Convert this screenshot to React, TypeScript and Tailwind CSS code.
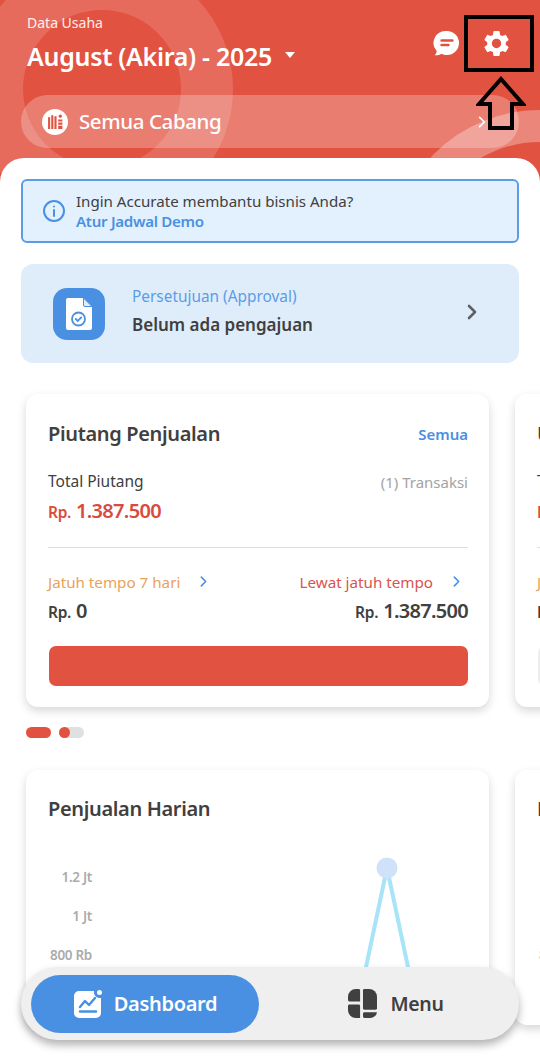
import React from "react";

const Chevron = ({ className, width = 3 }: { className: string; width?: number }) => (
  <svg viewBox="0 0 24 24" fill="none" stroke="currentColor" strokeWidth={width} strokeLinecap="round" strokeLinejoin="round" className={className}>
    <path d="M8 4l8 8-8 8" />
  </svg>
);

const Money = ({ value, tone }: { value: string; tone: string }) => (
  <div className={`flex items-baseline gap-[5px] font-semibold ${tone}`}>
    <span className="text-[15.5px] tracking-[-0.3px]">Rp.</span>
    <span className="text-[20px] tracking-[-0.7px]">{value}</span>
  </div>
);

const PiutangCard = ({ title, bar }: { title: string; bar: string }) => (
  <div className="w-[463px] h-[313px] shrink-0 rounded-[12px] bg-white pl-[22px] pr-[21px] pt-[25px] shadow-[0_4px_10px_rgba(0,0,0,0.16)]">
    <div className="flex items-center justify-between h-[30px]">
      <span className="text-[20px] font-semibold tracking-[-0.35px] text-[#404040]">{title}</span>
      <span className="text-[15px] font-semibold text-[#4a90e2]">Semua</span>
    </div>
    <div className="mt-[21px] flex items-center justify-between h-[24px] text-[15.5px]">
      <span className="text-[#404040]">Total Piutang</span>
      <span className="text-[15px] text-[#a3a3a3]">(1) Transaksi</span>
    </div>
    <div className="mt-[2px] h-[30px]">
      <Money value="1.387.500" tone="text-[#d94c3d]" />
    </div>
    <div className="mt-[21px] h-px bg-[#dddddd]" />
    <div className="mt-[22px] flex items-center justify-between h-[24px] text-[15.2px]">
      <div className="flex items-center gap-[17px] text-[#e8a25b]">
        <span>Jatuh tempo 7 hari</span>
        <Chevron className="w-[13px] h-[13px] text-[#4a90e2]" />
      </div>
      <div className="flex items-center gap-[17px] pr-[5px] text-[#d9534f]">
        <span>Lewat jatuh tempo</span>
        <Chevron className="w-[13px] h-[13px] text-[#4a90e2]" />
      </div>
    </div>
    <div className="mt-[1px] flex items-center justify-between h-[32px]">
      <Money value="0" tone="text-[#404040]" />
      <Money value="1.387.500" tone="text-[#404040]" />
    </div>
    <div className={`mt-[19px] ml-px h-[40px] rounded-[7px] ${bar}`} />
  </div>
);

const ChartCard = ({ title }: { title: string }) => (
  <div className="relative w-[463px] h-[255px] shrink-0 rounded-[12px] bg-white pl-[22px] pr-[21px] pt-[24px] shadow-[0_4px_10px_rgba(0,0,0,0.16)]">
    <div className="h-[30px] text-[20px] font-semibold tracking-[-0.35px] text-[#404040]">{title}</div>
    <div className="mt-[43px] flex flex-col items-end w-[44px] gap-[19px] text-[13.5px] leading-[20px] font-semibold tracking-[-0.3px] text-[#ababab]">
      <span>1.2 Jt</span>
      <span>1 Jt</span>
      <span className="whitespace-nowrap">800 Rb</span>
    </div>
    <svg viewBox="0 0 80 130" className="absolute left-[321px] top-[86px] w-[80px] h-[130px]">
      <path d="M15 130L40 12L65 130" fill="none" stroke="#a8e4f8" strokeWidth={4} />
      <circle cx="40" cy="12" r="10.5" fill="#cfe2fa" />
    </svg>
  </div>
);

export default function App() {
  return (
    <div className="relative w-[540px] h-[1064px] overflow-hidden bg-white font-['Noto_Sans',sans-serif]">
      <header className="relative h-[190px] overflow-hidden bg-[#e25241]">
        <div className="absolute left-[-29px] top-[-42px] w-[262px] h-[262px] rounded-full border-[52px] border-white/15" />
        <div className="absolute left-[390px] top-[110px] w-[300px] h-[300px] rounded-full border-[32px] border-white/30" />
        <div className="relative flex justify-between pl-[27px] pt-[14px]">
          <div className="text-white">
            <div className="text-[14px] leading-[18px] text-white/90">Data Usaha</div>
            <div className="mt-[4px] flex items-center gap-[13px]">
              <span className="text-[25px] leading-[40px] font-semibold tracking-[-0.3px]">August (Akira) - 2025</span>
              <span className="mt-[-3px] w-0 h-0 border-x-[5px] border-t-[6px] border-x-transparent border-t-white" />
            </div>
          </div>
          <div className="flex items-center gap-[21px] pr-[28px] pb-[4px] text-white">
            <svg viewBox="0 0 28 28" className="w-[28px] h-[28px]">
              <path d="M15 2a12 12 0 0 1 0 24c-2.300 0-4-.5-5.600-1.300C7.600 26 5 26.500 2.500 26.300c1.300-1 2.100-2.600 2.200-4.300A12 12 0 0 1 15 2z" fill="#fff" />
              <path d="M9.500 11.500h11M9.500 16h7" stroke="#e25241" strokeWidth={2.400} strokeLinecap="round" />
            </svg>
            <svg viewBox="0 0 24 24" fill="#fff" className="w-[31px] h-[31px]">
              <path d="M19.140 12.940c.04-.3.06-.61.06-.94 0-.32-.02-.64-.07-.94l2.030-1.580c.18-.14.23-.41.12-.61l-1.920-3.320c-.12-.22-.37-.29-.59-.22l-2.390.96c-.5-.38-1.030-.7-1.620-.94l-.36-2.540c-.04-.24-.24-.41-.48-.41h-3.840c-.24 0-.43.17-.47.41l-.36 2.540c-.59.24-1.130.57-1.620.94l-2.390-.96c-.22-.08-.47 0-.59.22L2.740 8.870c-.12.21-.08.47.12.61l2.030 1.580c-.05.3-.09.63-.09.94s.02.64.07.94l-2.030 1.580c-.18.14-.23.41-.12.61l1.920 3.320c.12.22.37.29.59.22l2.390-.96c.5.38 1.030.7 1.620.94l.36 2.540c.05.24.24.41.48.41h3.840c.24 0 .44-.17.47-.41l.36-2.540c.59-.24 1.130-.56 1.620-.94l2.390.96c.22.08.47 0 .59-.22l1.920-3.320c.12-.22.07-.47-.12-.61l-2.010-1.580zM12 15.600c-1.980 0-3.600-1.620-3.600-3.600s1.620-3.600 3.600-3.600 3.600 1.620 3.600 3.600-1.620 3.600-3.600 3.600z" />
            </svg>
          </div>
        </div>
        <div className="relative mx-[21px] mt-[19px] flex h-[53px] items-center rounded-full bg-white/25 pl-[21px] pr-[30px] text-white">
          <span className="flex w-[26px] h-[26px] items-center justify-center rounded-full bg-white">
            <svg viewBox="0 0 16 16" className="w-[17px] h-[17px]" fill="#e25241">
              <path d="M1 4h2v11H1zM4 2h2v13H4zM7 3h2v12H7z" />
              <circle cx="12.500" cy="3" r="1.500" />
              <path d="M10.500 6h4v2h-4zM10.500 9h4v2h-4zM10.500 12h4v3h-4z" />
            </svg>
          </span>
          <span className="ml-[11px] flex-1 text-[20.5px] font-medium tracking-[-0.4px]">Semua Cabang</span>
          <Chevron className="w-[14px] h-[14px]" />
        </div>
      </header>

      <main className="relative -mt-[32px] rounded-t-[24px] bg-white pt-[21px]">
        <section className="mx-[21px] flex h-[64px] items-center rounded-[6px] border-2 border-[#5b9ce6] bg-[#e3f0fd] pl-[19px]">
          <svg viewBox="0 0 24 24" fill="none" stroke="#4a90e2" strokeWidth={2} strokeLinecap="round" className="w-[24px] h-[24px]">
            <circle cx="12" cy="12" r="10" />
            <path d="M12 11v6M12 7.500v.01" />
          </svg>
          <div className="ml-[10px] text-[15.1px] leading-[20px]">
            <div className="text-[#404040]">Ingin Accurate membantu bisnis Anda?</div>
            <div className="font-semibold tracking-[-0.3px] text-[#4a90e2]">Atur Jadwal Demo</div>
          </div>
        </section>

        <section className="mx-[21px] mt-[21px] flex h-[99px] items-center rounded-[12px] bg-[#dfedfb] pl-[32px] pr-[38px]">
          <span className="flex w-[52px] h-[52px] items-center justify-center rounded-[14px] bg-[#4a90e2]">
            <svg viewBox="0 0 26 32" className="w-[26px] h-[32px]">
              <path d="M2 0h15l9 9v21a2 2 0 0 1-2 2H2a2 2 0 0 1-2-2V2a2 2 0 0 1 2-2z" fill="#fff" />
              <path d="M17.500 0l8.500 8.500h-7a1.500 1.500 0 0 1-1.500-1.500z" fill="#dfedfb" stroke="#4a90e2" strokeWidth={1} />
              <circle cx="12.500" cy="21" r="6.500" fill="none" stroke="#4a90e2" strokeWidth={1.800} />
              <path d="M9.800 21l2 2 3.400-3.600" fill="none" stroke="#4a90e2" strokeWidth={1.800} strokeLinecap="round" />
            </svg>
          </span>
          <div className="ml-[27px] flex-1 -mt-[4px]">
            <div className="text-[15.4px] leading-[22px] text-[#5b9ce6]">Persetujuan (Approval)</div>
            <div className="mt-[5px] text-[17px] leading-[24px] font-semibold text-[#404040]">Belum ada pengajuan</div>
          </div>
          <Chevron className="w-[18px] h-[18px] -mt-[4px] text-[#5a6068]" width={3.500} />
        </section>

        <div className="mt-[31px] flex gap-[26px] pl-[26px]">
          <PiutangCard title="Piutang Penjualan" bar="bg-[#e25241]" />
          <PiutangCard title="Utang Pembelian" bar="bg-[#eeeeee]" />
        </div>

        <div className="mt-[20px] flex gap-[8px] pl-[26px]">
          <span className="w-[25px] h-[11px] rounded-full bg-[#e25241]" />
          <span className="w-[25px] h-[11px] rounded-full bg-[#e0e0e0]">
            <span className="block w-[11px] h-[11px] rounded-full bg-[#e25241]" />
          </span>
        </div>

        <div className="mt-[32px] flex gap-[26px] pl-[26px]">
          <ChartCard title="Penjualan Harian" />
          <ChartCard title="Pembelian Harian" />
        </div>
      </main>

      <nav className="absolute left-[21px] top-[967px] flex h-[73px] w-[498px] items-center rounded-full bg-[#efefef] px-[10px] shadow-[0_5px_8px_rgba(0,0,0,0.3)]">
        <div className="flex h-[58px] w-[228px] items-center justify-center gap-[11px] rounded-full bg-[#4a90e2] text-white">
          <svg viewBox="0 0 30 30" className="w-[30px] h-[30px]">
            <path d="M6 2h15a6 6 0 0 0 7 7v15a5 5 0 0 1-5 5H6a5 5 0 0 1-5-5V7a5 5 0 0 1 5-5z" fill="#fff" />
            <circle cx="26.500" cy="3.500" r="2.500" fill="#fff" />
            <path d="M7 18l5-6 4 4 6-7" fill="none" stroke="#4a90e2" strokeWidth={2.400} strokeLinecap="round" strokeLinejoin="round" />
            <path d="M7 22.500h16" stroke="#4a90e2" strokeWidth={2.400} strokeLinecap="round" />
          </svg>
          <span className="text-[20px] font-semibold tracking-[-0.3px]">Dashboard</span>
        </div>
        <div className="flex flex-1 items-center justify-center gap-[13px] pl-[24px] text-[#404040]">
          <svg viewBox="0 0 30 30" className="w-[29px] h-[29px]" fill="#404040">
            <path d="M8 0h3a1.500 1.500 0 0 1 1.500 1.500V13H1.500A1.500 1.500 0 0 1 0 11.500V8a8 8 0 0 1 8-8z" />
            <path d="M15.500 1.500A1.500 1.500 0 0 1 17 0h5a8 8 0 0 1 8 8v12a1.500 1.500 0 0 1-1.500 1.500H17a1.500 1.500 0 0 1-1.500-1.500z" />
            <path d="M1.500 16h9.500a1.500 1.500 0 0 1 1.500 1.500V30H8a8 8 0 0 1-8-8v-4.500A1.500 1.500 0 0 1 1.500 16z" />
            <path d="M17 24h13a7 7 0 0 1-7 6h-6a1.500 1.500 0 0 1-1.500-1.500V25.500A1.500 1.500 0 0 1 17 24z" />
          </svg>
          <span className="text-[19.5px] font-semibold tracking-[-0.3px]">Menu</span>
        </div>
      </nav>

      <div className="absolute left-[464px] top-[15px] w-[70px] h-[57px] border-4 border-black" />
      <svg viewBox="0 0 50 56" className="absolute left-[476px] top-[76px] w-[50px] h-[56px]">
        <path d="M25 3L47 28H36V52H14V28H3Z" fill="none" stroke="#000" strokeWidth={4} strokeLinejoin="miter" />
      </svg>
    </div>
  );
}
